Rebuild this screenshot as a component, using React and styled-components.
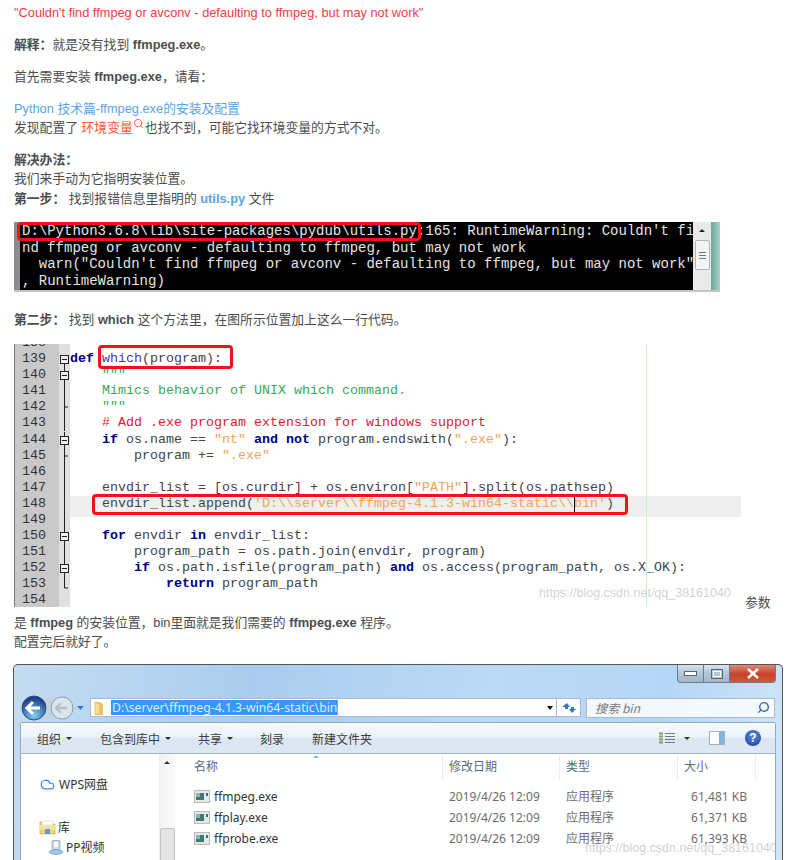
import styled, { createGlobalStyle } from "styled-components";
import { Cloud, Search } from "lucide-react";

const Global = createGlobalStyle`
html, body {
    margin: 0;
    height: 860px;
    overflow: hidden;
    background: #fff;
}
`;

const Article = styled.article`
    padding: 2.5px 0 0 14px;
    width: 786px;
    box-sizing: border-box;
    font-family: "Liberation Sans", "Noto Sans CJK SC", sans-serif;
    font-size: 12.8px;
    line-height: 19.4px;
    color: #4d4d4d;
`;

const Para = styled.p`
    margin: 0 0 12.6px;
`;

const Warning = styled.span`
    color: #f33b45;
`;

const Link = styled.a`
    color: #5aa5e3;
    font-weight: ${({ $bold }) => ($bold ? "bold" : "normal")};
    text-decoration: none;
`;

const Keyword = styled.span`
    color: #fc5531;
`;

const SearchMark = styled(Search)`
    vertical-align: 3px;
    margin-right: 1px;
`;

/* terminal capture */
const Terminal = styled.div`
    position: relative;
    display: flex;
    width: 706px;
    height: 70px;
    margin: 14px 0 18px;
    background: #000;
    border-bottom: 2px solid #c4c4c4;
    box-sizing: border-box;
`;

const TermEdge = styled.div`
    width: 6px;
    background: #8c8c8c;
`;

const TermText = styled.pre`
    flex: 1;
    margin: 0;
    padding: 1px 0 0 2px;
    overflow: hidden;
    font-family: "Liberation Mono", monospace;
    font-size: 14px;
    line-height: 16.5px;
    color: #e4e4e4;
`;

const TermBar = styled.div`
    width: 18px;
    background: #eaeaea;
    display: flex;
    flex-direction: column;
    align-items: center;
`;

const TermArrow = styled.div`
    margin-top: 7px;
    border: 3px solid transparent;
    border-bottom: 3px solid #222;
    border-top: 0;
`;

const TermThumb = styled.div`
    width: 15px;
    height: 30px;
    margin-top: 8px;
    border: 1px solid #b5b5b5;
    border-radius: 2px;
    box-sizing: border-box;
    background: #f4f4f4;
    display: flex;
    flex-direction: column;
    justify-content: center;
    gap: 2px;
    align-items: center;
`;

const TermGrip = styled.i`
    display: block;
    width: 7px;
    height: 1px;
    background: #777;
`;

const TermFrame = styled.div`
    width: 9px;
    background: linear-gradient(90deg, #6fa898, #a9d3c8);
`;

const RedBox = styled.div`
    position: absolute;
    left: ${({ $x }) => $x}px;
    top: ${({ $y }) => $y}px;
    width: ${({ $w }) => $w}px;
    height: ${({ $h }) => $h}px;
    border: 3px solid #f01414;
    border-radius: 4px;
    box-sizing: border-box;
`;

/* editor capture, sits inline with the text as an image would */
const Editor = styled.span`
    position: relative;
    display: inline-block;
    vertical-align: baseline;
    width: 731px;
    height: 263px;
    overflow: hidden;
    background: #fff;
    margin-top: 2px;
`;

const Rows = styled.span`
    display: block;
    margin-top: -9px;
`;

const Row = styled.span`
    display: grid;
    grid-template-columns: 45px 11px 1fr;
    height: 16.07px;
    font-family: "Liberation Mono", monospace;
    font-size: 13.33px;
    line-height: 16.07px;
    white-space: pre;
`;

const LineNo = styled.span`
    padding-left: 7px;
    background: #c9c9c9;
    border-left: 1px solid #7c7c7c;
    color: #333;
`;

const FoldCell = styled.span`
    background: #e0e0e0;
    display: block;
`;

const CodeText = styled.span`
    margin-right: 4px;
    background: ${({ $active }) => ($active ? "#efefef" : "transparent")};
    color: #444;
`;

const colours = { k: "#000080", s: "#f7a24f", d: "#3aa856", c: "#e0202e", f: "#3c3cb4", p: "#444" };

const Tok = styled.span`
    color: ${({ $t }) => colours[$t]};
    font-weight: ${({ $t }) => ($t === "k" ? "bold" : "normal")};
`;

const Caret = styled.span`
    display: inline-block;
    width: 0;
    height: 16px;
    vertical-align: top;
    border-left: 1px solid #000;
    margin-right: -1px;
`;

const GuideLine = styled.span`
    position: absolute;
    left: 632px;
    top: 0;
    width: 1px;
    height: 100%;
    background: #cdeccd;
`;

const Watermark = styled.span`
    position: absolute;
    left: ${({ $x }) => $x}px;
    top: ${({ $y }) => $y}px;
    font-family: "Liberation Sans", sans-serif;
    font-size: 12.5px;
    line-height: 16px;
    white-space: nowrap;
    color: rgba(170, 170, 170, 0.55);
`;

const Fold = ({ kind }) => (
    <FoldCell>
        <svg width="11" height="16" viewBox="0 0 11 16">
            {kind && kind !== "top" && <path d={kind === "end" ? "M5.5 0V12H9" : kind === "tick" ? "M5.5 0V16M5.5 8H9" : "M5.5 0V16"} stroke="#222" fill="none" />}
            {kind === "top" && <path d="M5.5 8V16" stroke="#222" />}
            {(kind === "box" || kind === "top") && (
                <>
                    <rect x="1.5" y="4.5" width="8" height="8" fill="#eee" stroke="#222" />
                    <path d="M3 8.5H8" stroke="#222" />
                </>
            )}
        </svg>
    </FoldCell>
);

const code = [
    [138, null, []],
    [139, "top", [["k", "def "], ["f", "which"], ["p", "(program):"]]],
    [140, "box", [["d", '    """']]],
    [141, "line", [["d", "    Mimics behavior of UNIX which command."]]],
    [142, "tick", [["d", '    """']]],
    [143, "line", [["c", "    # Add .exe program extension for windows support"]]],
    [144, "box", [["p", "    "], ["k", "if"], ["p", " os.name == "], ["s", '"nt"'], ["p", " "], ["k", "and not"], ["p", " program.endswith("], ["s", '".exe"'], ["p", "):"]]],
    [145, "tick", [["p", "        program += "], ["s", '".exe"']]],
    [146, "line", []],
    [147, "line", [["p", '    envdir_list = [os.curdir] + os.environ['], ["s", '"PATH"'], ["p", "].split(os.pathsep)"]]],
    [148, "line", [["p", "    envdir_list.append("], ["s", "'D:\\\\server\\\\ffmpeg-4.1.3-win64-static\\\\"], ["caret", ""], ["s", "bin'"], ["p", ")"]]],
    [149, "line", []],
    [150, "box", [["p", "    "], ["k", "for"], ["p", " envdir "], ["k", "in"], ["p", " envdir_list:"]]],
    [151, "line", [["p", "        program_path = os.path.join(envdir, program)"]]],
    [152, "box", [["p", "        "], ["k", "if"], ["p", " os.path.isfile(program_path) "], ["k", "and"], ["p", " os.access(program_path, os.X_OK):"]]],
    [153, "end", [["p", "            "], ["k", "return"], ["p", " program_path"]]],
    [154, null, []],
];

/* explorer window capture */
const Explorer = styled.div`
    position: relative;
    width: 770px;
    height: 197px;
    margin-top: 13px;
    margin-left: -1px;
    box-sizing: border-box;
    border: 1px solid #555;
    border-bottom: 0;
    border-radius: 5px 5px 0 0;
    overflow: hidden;
    background: linear-gradient(100deg, #c5dcf1 0%, #a9cdef 30%, #bcd9f5 60%, #b4d6f5 82%, #d3e6f6 100%);
`;

const Caption = styled.div`
    display: flex;
    justify-content: flex-end;
    height: 19px;
    padding-right: 6px;
`;

const CaptionBtn = styled.div`
    width: ${({ $w }) => $w}px;
    height: 18px;
    display: flex;
    align-items: center;
    justify-content: center;
    box-sizing: border-box;
    border: 1px solid #6c7c8c;
    border-top: 0;
    border-left-width: ${({ $first }) => ($first ? 1 : 0)}px;
    border-radius: ${({ $first, $last }) => ($first ? "0 0 0 4px" : $last ? "0 0 4px 0" : "0")};
    background: ${({ $close }) => ($close ? "linear-gradient(#dd8b78, #c8402a 55%, #d0573f)" : "linear-gradient(#d8e4ef, #b4c5d6 50%, #a3b6c8)")};
`;

const NavBar = styled.div`
    display: flex;
    align-items: center;
    height: 38px;
    padding: 9px 7px 0 7px;
    box-sizing: border-box;
`;

const NavIcons = styled.svg`
    flex: none;
    margin-right: 0;
`;

const Address = styled.div`
    width: 468px;
    height: 19px;
    display: flex;
    align-items: center;
    background: #fff;
    border: 1px solid #a8bacb;
    box-sizing: border-box;
    font-family: "Noto Sans", "Liberation Sans", sans-serif;
    font-size: 12.2px;
`;

const Selected = styled.span`
    margin-left: 4px;
    background: #3399ff;
    color: #dcecff;
    line-height: 15px;
    padding: 0 0 0 1px;
    border-right: 1px solid #f09030;
`;

const AddressDrop = styled.div`
    margin-left: auto;
    margin-right: 3px;
    border: 3px solid transparent;
    border-top: 4px solid #111;
    border-bottom: 0;
`;

const Refresh = styled.div`
    width: 24px;
    height: 19px;
    background: #fff;
    border: 1px solid #a8bacb;
    border-left: 0;
    box-sizing: border-box;
    display: flex;
    align-items: center;
    justify-content: center;
`;

const SearchBox = styled.div`
    width: 189px;
    height: 20px;
    margin-left: 5px;
    display: flex;
    align-items: center;
    justify-content: space-between;
    padding: 0 4px 0 8px;
    box-sizing: border-box;
    background: rgba(255, 255, 255, 0.82);
    border: 1px solid #a8bacb;
    font-family: "Noto Sans CJK SC", sans-serif;
    font-style: italic;
    font-size: 12px;
    color: #7a7a7a;
`;

const Inner = styled.div`
    margin: 0 6px 0 6px;
    border: 1px solid #93a9bf;
    border-radius: 2px 2px 0 0;
    background: #fff;
    height: 200px;
`;

const ToolBar = styled.div`
    display: flex;
    align-items: center;
    height: 30px;
    padding: 0 14px 0 16px;
    border-bottom: 1px solid #a0b4c8;
    background: linear-gradient(#f6fafd 0%, #eaf2f9 48%, #dbe6f2 50%, #dde8f3 100%);
    font-family: "Noto Sans CJK SC", sans-serif;
    font-size: 12px;
    color: #3c3c3c;
`;

const ToolItem = styled.span`
    display: inline-flex;
    align-items: center;
    gap: 5px;
    margin-right: ${({ $gap }) => $gap}px;
    white-space: nowrap;
`;

const Drop = styled.i`
    display: block;
    border: 3px solid transparent;
    border-top: 3px solid #333;
    border-bottom: 0;
`;

const ViewDrop = styled(Drop)`
    margin: 0 19px 0 9px;
`;

const ToolRight = styled.div`
    margin-left: auto;
    display: flex;
    align-items: center;
`;

const HelpIcon = styled.span`
    width: 16px;
    height: 16px;
    margin-left: 20px;
    border-radius: 50%;
    background: radial-gradient(circle at 50% 35%, #5d8fe0, #16379a);
    color: #fff;
    font: bold 12px/16px "Liberation Sans", sans-serif;
    text-align: center;
`;

const Panes = styled.div`
    display: grid;
    grid-template-columns: 138px 16px 1fr;
    font-family: "Noto Sans", "Noto Sans CJK SC", sans-serif;
    font-size: 12px;
    color: #444;
`;

const Side = styled.div`
    padding-top: 20px;
    display: flex;
    flex-direction: column;
`;

const SideItem = styled.div`
    display: flex;
    align-items: center;
    gap: ${({ $gap }) => $gap}px;
    height: 20px;
    padding-left: ${({ $indent }) => $indent}px;
    margin-bottom: ${({ $after }) => $after || 0}px;
    color: #333;
`;

const SideBar = styled.div`
    background: linear-gradient(90deg, #f2f2f2, #fafafa);
    border-left: 1px solid #eee;
    position: relative;
    height: 200px;
`;

const SideArrow = styled.div`
    position: absolute;
    left: 4px;
    top: 7px;
    border: 3px solid transparent;
    border-bottom: 3px solid #333;
    border-top: 0;
`;

const SideThumb = styled.div`
    position: absolute;
    left: 0;
    right: 0;
    top: 74px;
    height: 100px;
    background: #e4e4e4;
    border: 1px solid #c2c2c2;
    border-radius: 2px;
`;

const Files = styled.div`
    padding-left: 0;
`;

const HeadRow = styled.div`
    display: grid;
    grid-template-columns: 268px 117px 118px 78px 1fr;
    height: 26px;
    margin-bottom: 6px;
    align-items: center;
    color: #5a6b7c;
`;

const HeadCell = styled.div`
    position: relative;
    height: 24px;
    line-height: 24px;
    padding-left: ${({ $pad }) => $pad || 6}px;
    border-right: 1px solid #e7edf3;
    box-sizing: border-box;
`;

const SortMark = styled.i`
    position: absolute;
    left: 138px;
    top: 0;
    border: 3px solid transparent;
    border-bottom: 3px solid #8fb4d4;
    border-top: 0;
`;

const FileRow = styled.div`
    display: grid;
    grid-template-columns: 268px 117px 118px 69px;
    height: 21px;
    line-height: 21px;
    color: #6d6d6d;
`;

const FileName = styled.div`
    display: flex;
    align-items: center;
    gap: 4px;
    padding-left: 19px;
    color: #333;
`;

const FileCell = styled.div`
    padding-left: 6px;
`;

const FileSize = styled.div`
    text-align: right;
`;

const ExeIcon = () => (
    <svg width="16" height="13" viewBox="0 0 16 13">
        <rect x="0.5" y="0.5" width="15" height="12" fill="#e4e8e8" stroke="#b6bcbc" />
        <rect x="2" y="3" width="8" height="7" fill="#3f7a6a" />
        <rect x="2" y="3" width="4" height="4" fill="#8fb0c4" />
        <rect x="12" y="3" width="2" height="3" fill="#2f6f9f" />
    </svg>
);

const FolderIcon = () => (
    <svg width="16" height="16" viewBox="0 0 16 16">
        <path d="M4 2h5l3 2v11H4z" fill="#e8c567" />
        <path d="M4 2l5 2v11l-5-1z" fill="#f5dc8e" stroke="#c9a646" strokeWidth=".5" />
    </svg>
);

const LibIcon = () => (
    <svg width="17" height="15" viewBox="0 0 17 15">
        <path d="M1 2h5l1 2h9v10H1z" fill="#f0d27a" stroke="#c8a650" strokeWidth=".7" />
        <rect x="3" y="1" width="11" height="4" fill="#fff" stroke="#c9c9c9" strokeWidth=".5" />
        <rect x="1" y="5" width="15" height="5" fill="#f7e29c" />
        <rect x="6" y="9" width="5" height="5" fill="#5f9bd3" />
    </svg>
);

const MediaIcon = () => (
    <svg width="16" height="15" viewBox="0 0 16 15">
        <rect x="4" y="0.5" width="8" height="9" rx="1" fill="#c9d8e6" stroke="#8aa0b4" strokeWidth=".7" />
        <rect x="6" y="2" width="4" height="5" fill="#fff" />
        <ellipse cx="8" cy="12" rx="7" ry="2.5" fill="#9fc5e6" stroke="#6f9cc4" strokeWidth=".6" />
    </svg>
);

const files = [
    ["ffmpeg.exe", "61,481 KB"],
    ["ffplay.exe", "61,371 KB"],
    ["ffprobe.exe", "61,393 KB"],
];

export default function App() {
    return (
        <>
            <Global />
            <Article>
                <Para><Warning>"Couldn't find ffmpeg or avconv - defaulting to ffmpeg, but may not work"</Warning></Para>
                <Para><b>解释：</b>就是没有找到 <b>ffmpeg.exe</b>。</Para>
                <Para>首先需要安装 <b>ffmpeg.exe</b>，请看：</Para>
                <Para>
                    <Link>Python 技术篇-ffmpeg.exe的安装及配置</Link><br />
                    发现配置了 <Keyword>环境变量</Keyword><SearchMark size={11} color="#fc5531" strokeWidth={2} />也找不到，可能它找环境变量的方式不对。
                </Para>
                <Para>
                    <b>解决办法：</b><br />
                    我们来手动为它指明安装位置。<br />
                    <b>第一步：</b> 找到报错信息里指明的 <Link $bold>utils.py</Link> 文件
                </Para>
                <Terminal>
                    <TermEdge />
                    <TermText>{`D:\\Python3.6.8\\lib\\site-packages\\pydub\\utils.py:165: RuntimeWarning: Couldn't fi
nd ffmpeg or avconv - defaulting to ffmpeg, but may not work
  warn("Couldn't find ffmpeg or avconv - defaulting to ffmpeg, but may not work"
, RuntimeWarning)`}</TermText>
                    <TermBar>
                        <TermArrow />
                        <TermThumb>
                            <TermGrip />
                            <TermGrip />
                            <TermGrip />
                        </TermThumb>
                    </TermBar>
                    <TermFrame />
                    <RedBox $x={3} $y={0} $w={404} $h={19} />
                </Terminal>
                <Para><b>第二步：</b> 找到 <b>which</b> 这个方法里，在图所示位置加上这么一行代码。</Para>
                <Para>
                    <Editor>
                        <Rows>
                            {code.map(([no, fold, toks]) => (
                                <Row key={no}>
                                    <LineNo>{no}</LineNo>
                                    <Fold kind={fold} />
                                    <CodeText $active={no === 148}>
                                        {toks.map(([t, text], i) => (t === "caret" ? <Caret key={i} /> : <Tok key={i} $t={t}>{text}</Tok>))}
                                    </CodeText>
                                </Row>
                            ))}
                        </Rows>
                        <GuideLine />
                        <RedBox $x={84} $y={1} $w={135} $h={24} />
                        <RedBox $x={78} $y={150} $w={536} $h={21} />
                        <Watermark $x={525} $y={241}>https://blog.csdn.net/qq_38161040</Watermark>
                    </Editor>
                    参数<br />
                    是 <b>ffmpeg</b> 的安装位置，bin里面就是我们需要的 <b>ffmpeg.exe</b> 程序。<br />
                    配置完后就好了。
                </Para>
                <Explorer>
                    <Caption>
                        <CaptionBtn $w={27} $first>
                            <svg width="13" height="6"><rect x=".5" y=".5" width="12" height="4" fill="#fff" stroke="#55677a" /></svg>
                        </CaptionBtn>
                        <CaptionBtn $w={26}>
                            <svg width="12" height="10"><rect x=".5" y=".5" width="11" height="9" fill="none" stroke="#55677a" /><rect x="2.5" y="2.5" width="7" height="5" fill="none" stroke="#fff" /></svg>
                        </CaptionBtn>
                        <CaptionBtn $w={46} $close $last>
                            <svg width="14" height="11" viewBox="0 0 14 11"><path d="M2 1l10 9M12 1L2 10" stroke="#fff" strokeWidth="2.6" /></svg>
                        </CaptionBtn>
                    </Caption>
                    <NavBar>
                        <NavIcons width="69" height="30" viewBox="0 0 69 30">
                            <defs>
                                <radialGradient id="back" cx="50%" cy="80%" r="70%">
                                    <stop offset="0" stopColor="#7fd4f5" />
                                    <stop offset="1" stopColor="#1c3f86" />
                                </radialGradient>
                            </defs>
                            <path d="M14 5h26v20H14z" fill="#c3d3e2" />
                            <circle cx="41" cy="15" r="11" fill="#dbe5ee" stroke="#8a9aa8" />
                            <path d="M35 15h11M40 10l-5 5 5 5" stroke="#b4c0cb" strokeWidth="2.4" fill="none" />
                            <circle cx="13" cy="15" r="12" fill="url(#back)" stroke="#2c4f80" />
                            <path d="M7 15h12M12 9l-6 6 6 6" stroke="#fff" strokeWidth="3" fill="none" />
                            <path d="M56 13h7l-3.5 4z" fill="#2a7fc0" />
                        </NavIcons>
                        <Address>
                            <FolderIcon />
                            <Selected>D:\server\ffmpeg-4.1.3-win64-static\bin</Selected>
                            <AddressDrop />
                        </Address>
                        <Refresh>
                            <svg width="16" height="12" viewBox="0 0 16 12"><path d="M6 1L1 5h3v2h3V5h2zM11 11l4-4h-2V5h-3v2H8z" fill="#2f7cc2" /></svg>
                        </Refresh>
                        <SearchBox>
                            <span>搜索 bin</span>
                            <Search size={13} color="#2a6db0" strokeWidth={2.6} style={{ transform: "scaleX(-1)" }} />
                        </SearchBox>
                    </NavBar>
                    <Inner>
                        <ToolBar>
                            <ToolItem $gap={28}>组织<Drop /></ToolItem>
                            <ToolItem $gap={27}>包含到库中<Drop /></ToolItem>
                            <ToolItem $gap={27}>共享<Drop /></ToolItem>
                            <ToolItem $gap={28}>刻录</ToolItem>
                            <ToolItem $gap={0}>新建文件夹</ToolItem>
                            <ToolRight>
                                <svg width="16" height="13" viewBox="0 0 16 13">
                                    <path d="M0 1.5h4M0 4.5h4M0 7.5h4M0 10.5h4" stroke="#7fa06a" strokeWidth="2" />
                                    <path d="M6 1.5h10M6 4.5h10M6 7.5h10M6 10.5h10" stroke="#6a7a8a" />
                                </svg>
                                <ViewDrop />
                                <svg width="16" height="14" viewBox="0 0 16 14">
                                    <rect x=".5" y=".5" width="15" height="13" fill="#fff" stroke="#9fb2c4" />
                                    <rect x="10" y="1" width="5" height="12" fill="#7fb4dc" />
                                </svg>
                                <HelpIcon>?</HelpIcon>
                            </ToolRight>
                        </ToolBar>
                        <Panes>
                            <Side>
                                <SideItem $indent={19} $gap={4} $after={23}>
                                    <Cloud size={15} color="#3d85e0" strokeWidth={1.8} />WPS网盘
                                </SideItem>
                                <SideItem $indent={18} $gap={2}><LibIcon />库</SideItem>
                                <SideItem $indent={27} $gap={2}><MediaIcon />PP视频</SideItem>
                            </Side>
                            <SideBar>
                                <SideArrow />
                                <SideThumb />
                            </SideBar>
                            <Files>
                                <HeadRow>
                                    <HeadCell $pad={19}>名称<SortMark /></HeadCell>
                                    <HeadCell>修改日期</HeadCell>
                                    <HeadCell>类型</HeadCell>
                                    <HeadCell>大小</HeadCell>
                                    <div />
                                </HeadRow>
                                {files.map(([name, size]) => (
                                    <FileRow key={name}>
                                        <FileName><ExeIcon />{name}</FileName>
                                        <FileCell>2019/4/26 12:09</FileCell>
                                        <FileCell>应用程序</FileCell>
                                        <FileSize>{size}</FileSize>
                                    </FileRow>
                                ))}
                            </Files>
                        </Panes>
                    </Inner>
                    <Watermark $x={571} $y={175}>https://blog.csdn.net/qq_38161040</Watermark>
                </Explorer>
            </Article>
        </>
    );
}
